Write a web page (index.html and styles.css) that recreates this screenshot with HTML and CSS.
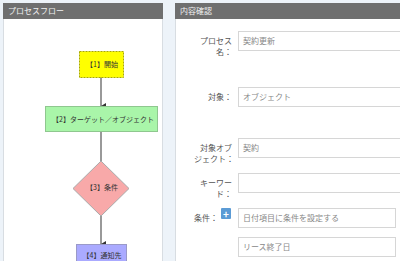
FILE: index.html
```html
<!DOCTYPE html>
<html lang="ja">
<head>
    <meta charset="UTF-8">
    <title>プロセス確認</title>
    <link rel="stylesheet" href="styles.css">
</head>
<body>
    <div class="page">
        <div class="panel flow-panel">
            <div class="panel-header">プロセスフロー</div>
            <div class="panel-body">
                <svg class="flow" width="158" height="242" viewBox="0 0 158 242">
                    <defs>
                        <marker id="arrow" markerWidth="6" markerHeight="6" refX="3" refY="5" orient="auto" markerUnits="userSpaceOnUse">
                            <path d="M0,0 L6,0 L3,5 Z" fill="#333"/>
                        </marker>
                    </defs>
                    <line x1="97" y1="58" x2="97" y2="87" class="edge" marker-end="url(#arrow)"/>
                    <line x1="97" y1="112" x2="97" y2="142" class="edge"/>
                    <line x1="97" y1="197" x2="97" y2="225" class="edge" marker-end="url(#arrow)"/>

                    <rect x="75.5" y="32.5" width="44" height="26" class="node-start"/>
                    <text x="98" y="48" class="label">【1】開始</text>

                    <rect x="41.5" y="87.5" width="112" height="25" class="node-target"/>
                    <text x="99" y="102.5" class="label">【2】ターゲット／オブジェクト</text>

                    <polygon points="97,142 125,169.5 97,197 69,169.5" class="node-cond"/>
                    <text x="98" y="171" class="label">【3】条件</text>

                    <rect x="72.5" y="225.5" width="50" height="30" class="node-notify"/>
                    <text x="98" y="239" class="label">【4】通知先</text>
                </svg>
            </div>
        </div>

        <div class="panel form-panel">
            <div class="panel-header">内容確認</div>
            <div class="panel-body form-body">
                <div class="row row-name">
                    <label class="row-label two-line">プロセス<br>名：</label>
                    <div class="field wide">契約更新</div>
                </div>
                <div class="row row-target">
                    <label class="row-label">対象：</label>
                    <div class="field wide">オブジェクト</div>
                </div>
                <div class="row row-object">
                    <label class="row-label two-line">対象オブ<br>ジェクト：</label>
                    <div class="field wide">契約</div>
                </div>
                <div class="row row-keyword">
                    <label class="row-label two-line">キーワー<br>ド：</label>
                    <div class="field wide"></div>
                </div>
                <div class="row row-cond">
                    <label class="row-label cond-label">条件：<span class="add-btn">+</span></label>
                    <div class="field narrow">日付項目に条件を設定する</div>
                </div>
                <div class="row row-cond2">
                    <span class="row-label"></span>
                    <div class="field narrow">リース終了日</div>
                </div>
            </div>
        </div>
    </div>
</body>
</html>
```

FILE: styles.css
```css
html, body {
    margin: 0;
    padding: 0;
}
body {
    font-family: "Noto Sans CJK JP", "Liberation Sans", sans-serif;
    font-size: 8px;
    color: #555;
    background-color: #edf3f9;
    overflow: hidden;
    height: 261px;
}
.page {
    display: flex;
    gap: 12px;
    padding: 3px 0 0 3px;
    height: 261px;
    width: 400px;
    box-sizing: border-box;
    overflow: hidden;
}
.panel {
    background: white;
    border: 1px solid #d8dde2;
    border-bottom: none;
    display: flex;
    flex-direction: column;
    flex: none;
}
.flow-panel {
    width: 158px;
}
.form-panel {
    width: 262px;
}
.panel-header {
    background-color: #6f6f6f;
    color: #f2f2f2;
    height: 16px;
    line-height: 16px;
    padding-left: 5px;
    font-size: 8px;
    margin: -1px -1px 0 -1px;
}
.panel-body {
    flex: 1;
}
.flow {
    display: block;
}
.edge {
    stroke: #777;
    stroke-width: 1.5;
}
.label {
    font-size: 7px;
    fill: #333;
    text-anchor: middle;
    font-family: "Noto Sans CJK JP", sans-serif;
}
.node-start {
    fill: #ffff00;
    stroke: #a8a800;
    stroke-dasharray: 2 1;
}
.node-target {
    fill: #a9f5a9;
    stroke: #8fc78f;
}
.node-cond {
    fill: #f8a9a9;
    stroke: #aaa;
}
.node-notify {
    fill: #aaaaff;
    stroke: #9a9ac8;
}

/* form */
.form-body {
    padding-left: 18px;
}
.row {
    display: flex;
    align-items: flex-start;
    height: 20px;
}
.row-label {
    width: 38px;
    flex: none;
    text-align: right;
    line-height: 11px;
    padding-top: 4px;
    margin-right: 6px;
    white-space: nowrap;
    color: #555;
}
.field {
    box-sizing: border-box;
    border: 1px solid #d6d6d6;
    height: 20px;
    line-height: 18px;
    padding-left: 4px;
    color: #888;
    background: white;
    flex: none;
    white-space: nowrap;
}
.wide {
    width: 220px;
}
.narrow {
    width: 158px;
}
.row-name {
    margin-top: 12px;
}
.row-target {
    margin-top: 36px;
}
.row-object {
    margin-top: 31px;
}
.row-keyword {
    margin-top: 15px;
}
.row-cond {
    margin-top: 15px;
}
.cond-label {
    display: flex;
    justify-content: flex-end;
    align-items: flex-start;
    padding-top: 0;
    height: 20px;
    line-height: 20px;
    margin-right: 7px;
    width: 37px;
}
.add-btn {
    display: block;
    width: 13px;
    height: 11px;
    line-height: 11px;
    background: #5b9bd5;
    color: white;
    text-align: center;
    font-weight: bold;
    font-size: 10px;
    border-radius: 1px;
    margin-left: 3px;
}
.row-cond2 {
    margin-top: 9px;
}
```
